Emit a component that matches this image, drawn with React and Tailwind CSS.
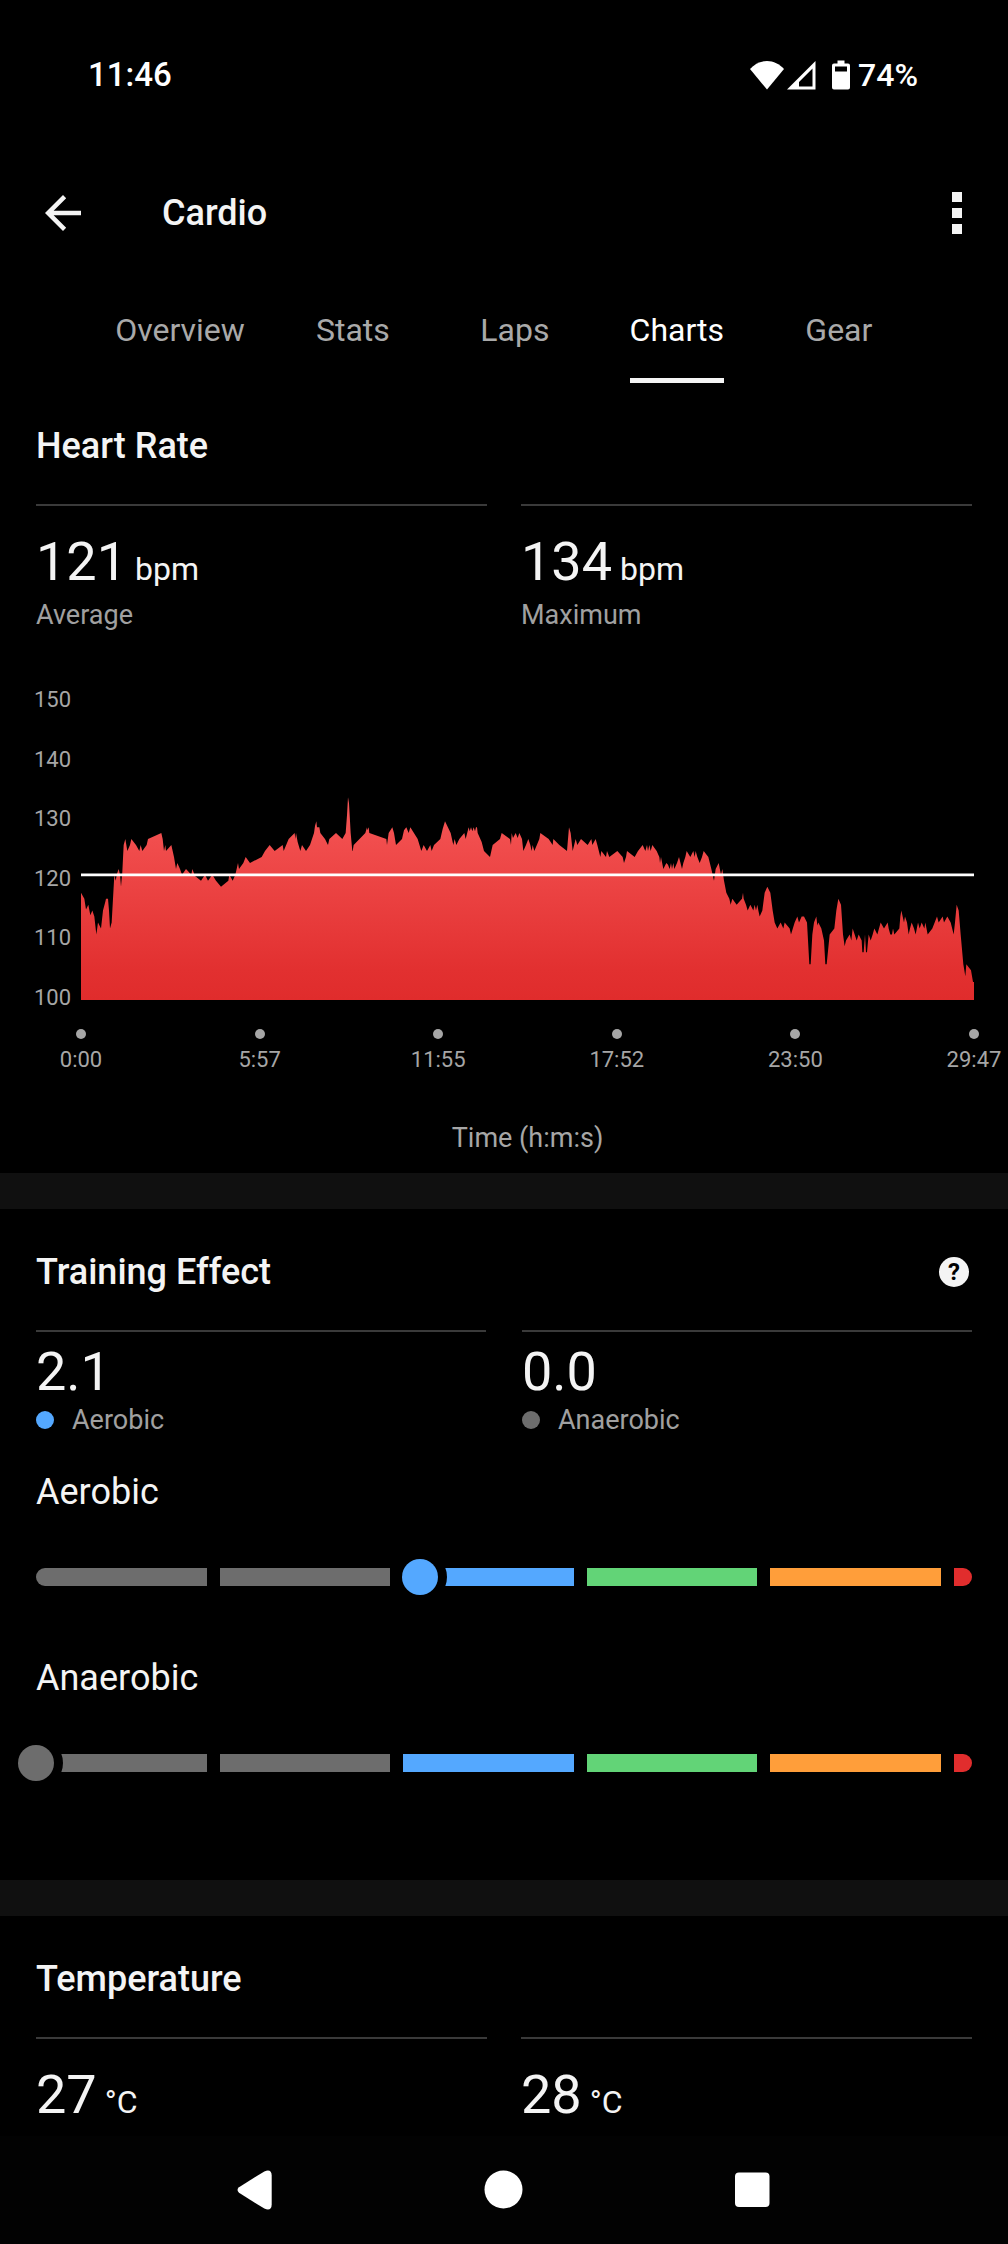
import React, { useState } from 'react';
import { MdArrowBack } from 'react-icons/md';

const TABS = ['Overview', 'Stats', 'Laps', 'Charts', 'Gear'];

const Y_LABELS = [150, 140, 130, 120, 110, 100];
const X_LABELS = ['0:00', '5:57', '11:55', '17:52', '23:50', '29:47'];

// chart units: the whole activity is 2679 wide, 50 bpm is 893 high
const CHART_W = 2679;
const CHART_H = 893;
const MIN_BPM = 100;
const MAX_BPM = 150;
const AVG_BPM = 121;

// "offset,bpm" samples, each lap's offsets are counted from its own start
const LAPS = [
  {
    start: -183,
    samples:
      '183,118 193,117 198,115.2 205,116 211,114.2 217,115 223,114 226,112.5 229,111 234,113 243,112 249,115 256,116.5 258,117 264,117 267,115 270,112 275,113 280,118 283,121 287,120 291,121.2 296,122 300,121 303,119 307,121.5 311,126 316,127 322,125 330,126 334,127 348,126 358,125 362,126 367,125 380,126 384,127 424,128 428,127 432,125 436,126 438,125 454,126 462,124 468,122 472,123 480,122 486,121 498,122 514,121 517,122 525,120.8 543,120 555,121 564,120 577,121 588,120 603,119 625,120 628,121 638,120 646,121 654,123 657,122 670,123 677,124 690,123 725,124 735,125 749,126 764,125 788,126 791,125 806,127 824,128 826,127 828,128 833,126.5 841,125 846,126 858,125 870,126 882,128 885,129.2 889,130 891,129 898,129 901,128 915,127 924,126 928,127 948,128 967,127 977,128 981,131 984,134 987,133 992,128 997,125',
  },
  {
    start: 777,
    samples:
      '38,125 41,126 76,128 81,129 82,128.5 86,129 88,128 139,127 141,126 146,128 157,129 162,128 168,126 186,127 192,128.5 199,129 206,128 211,129 233,127 244,125 251,126 261,125 271,126 275,125 282,126 301,127 308,128.7 315,130 332,128 340,126 344,127 349,126 358,127 373,128 377,127 386,129 389,128.3 393,129 397,128.3 401,129 405,128.3 408,129 411,129 413,128 425,126.5 432,125 450,124 458,126 480,127 485,128 510,127 513,126 515,128 519,127.2 527,128 533,127.2 538,128 546,127 550,125 558,126 565,127 571,126 575,125 578,126 583,125 598,127 601,128 626,127 638,126 640,127 658,126 681,125 684,127 687,129 692,128 698,125 707,127 712,126 723,127 743,126 754,127 757,126 767,127 772,126 781,124 784,125 798,124 801,125 808,124 832,125 848,124 852,123 858,124 861,125 884,124 894,125 908,126 916,125 921,126 924,125 928,126 932,125 937,126 950,125 958,124 960,123 963,124 970,122 979,123',
  },
  {
    start: 1761,
    samples:
      '0,122.7 5,122 9,123 12,122 16,123 19,122 27,123 33,124 42,122 46,123 52,124 56,125 67,124 76,125 80,124 83,125 88,124 95,123 102,124 107,125 121,124 130,122 138,120 143,122 152,123 159,121 163,122 168,120 175,118 184,117 188,116 193,117 206,116 222,117 225,118 227,117 234,116 239,115 247,116 256,115 260,116 264,115 268,116 271,115 275,114 283,115 290,118 298,119 307,118 314,115 320,113 328,112 338,113 346,112 350,113 365,112 369,111 380,113 388,114 393,113 401,114 408,114 417,113 420,110 424,106 428,106 433,111 438,113 445,114 448,112.5 451,113 460,112 468,110 472,106 476,106 485,111 499,112 505,115 511,117 519,116 525,111 530,109 534,110 545,111 550,110 554,112 566,110 572,111 581,110 583,108 587,108 591,111 594,108 597,108 602,111 608,110 614,111 619,112 628,111 638,113 648,112 659,113 662,112 667,111 672,111 675,112 679,111 694,112 697,114 700,115 708,113 711,114 717,113 722,111 726,112 731,113 738,112 743,111 750,113 755,112 761,113 769,112 772,113 779,111 793,112 800,113 807,114 812,113 824,114 828,113 838,114 848,113 857,111 861,113 866,116 872,115 878,111 886,106 892,104 895,106 909,105 915,103 918,103',
  },
];

const toY = bpm => ((MAX_BPM - bpm) / (MAX_BPM - MIN_BPM)) * CHART_H;

const areaPoints = () => {
  const line = LAPS.flatMap(({ start, samples }) =>
    samples.split(' ').map(s => {
      const [x, bpm] = s.split(',').map(Number);
      return `${start + x},${toY(bpm).toFixed(1)}`;
    })
  );
  return [`0,${CHART_H}`, ...line, `${CHART_W},${CHART_H}`].join(' ');
};

const StatusBar = () => (
  <div className="h-[150px] pl-[88px] pr-[90px] flex items-center justify-between text-white text-[32px] leading-10 font-medium">
    <span className="text-[33px]">11:46</span>
    <div className="flex items-center">
      <svg className="w-[34px] h-[30px]" viewBox="0 0 34 30" fill="currentColor">
        <path d="M17 29.500L0 9C4.500 4 10.500 1 17 1s12.500 3 17 8z" />
      </svg>
      <svg className="w-[30px] h-[30px] ml-[3px]" viewBox="0 0 30 30" fill="currentColor">
        <path fillRule="evenodd" d="M0 29.500L28.500 1v28.500zM12 26.500h13.500V8.500L12 22z" />
      </svg>
      <svg className="w-[18px] h-[30px] ml-[15px]" viewBox="0 0 18 30" fill="currentColor">
        <path
          fillRule="evenodd"
          d="M5.500 0.500h7v3H16a2 2 0 0 1 2 2V27.500a2 2 0 0 1-2 2H2a2 2 0 0 1-2-2V5.500a2 2 0 0 1 2-2h3.500zM3 6.500v5h12v-5z"
        />
      </svg>
      <span className="ml-2">74%</span>
    </div>
  </div>
);

const AppBar = () => (
  <header className="h-[126px] pl-9 pr-6 flex items-center">
    <button type="button" aria-label="Back">
      <MdArrowBack className="w-[54px] h-[54px]" />
    </button>
    <h1 className="ml-[72px] flex-1 text-[36px] leading-[44px] font-medium">Cardio</h1>
    <button type="button" aria-label="More options" className="w-[54px] h-[54px] flex items-center justify-center">
      <svg className="w-[10px] h-[42px]" viewBox="0 0 10 42" fill="currentColor">
        <rect width="10" height="10" />
        <rect y="16" width="10" height="10" />
        <rect y="32" width="10" height="10" />
      </svg>
    </button>
  </header>
);

const Tabs = ({ active, onSelect }) => (
  <nav className="h-[107px] flex justify-center">
    {TABS.map(tab => (
      <button
        key={tab}
        type="button"
        onClick={() => onSelect(tab)}
        className="min-w-[162px] px-[27px] flex justify-center text-[32px] leading-10"
      >
        <span
          className={
            tab === active
              ? 'h-full flex items-center border-y-[5px] border-t-transparent border-b-[#f4f4f4] text-white'
              : 'h-full flex items-center border-y-[5px] border-transparent text-[#a9a9a9]'
          }
        >
          {tab}
        </span>
      </button>
    ))}
  </nav>
);

const SectionTitle = ({ children, action }) => (
  <div className="pt-[41px] pb-9 flex items-center justify-between">
    <h2 className="text-[36px] leading-[44px] font-medium">{children}</h2>
    {action}
  </div>
);

const Stat = ({ value, unit, label }) => (
  <div className="border-t-2 border-[#3a3a3a] pt-6">
    <div className="flex items-baseline gap-2 text-[54px] leading-[64px]">
      {value}
      <span className="text-[32px] leading-8">{unit}</span>
    </div>
    {label && <div className="mt-[5px] text-[27px] leading-8 text-[#a0a0a0]">{label}</div>}
  </div>
);

const EffectStat = ({ value, label, dotClass }) => (
  <div className="border-t-2 border-[#3a3a3a] pt-2">
    <div className="text-[54px] leading-[64px]">{value}</div>
    <div className="flex items-center gap-[18px] text-[27px] leading-8 text-[#a0a0a0]">
      <span className={`w-[18px] h-[18px] rounded-full ${dotClass}`} />
      {label}
    </div>
  </div>
);

const HeartRateChart = () => (
  <div className="px-[34px] text-[22px] text-[#a6a6a6]">
    <div className="flex">
      <div className="w-[47px] shrink-0 flex flex-col justify-between leading-5">
        {Y_LABELS.map(v => <span key={v}>{v}</span>)}
      </div>
      <svg
        className="flex-1 min-w-0 h-[298px] mt-3 mb-2"
        viewBox={`0 0 ${CHART_W} ${CHART_H}`}
        preserveAspectRatio="none"
        role="img"
        aria-label="Heart rate over time"
      >
        <defs>
          <linearGradient id="hrFill" x1="0" y1="0" x2="0" y2="1">
            <stop offset="0" stopColor="#f65757" />
            <stop offset="0.85" stopColor="#e23030" />
            <stop offset="1" stopColor="#e02c2c" />
          </linearGradient>
        </defs>
        <polygon points={areaPoints()} fill="url(#hrFill)" />
        <line x1="0" x2={CHART_W} y1={toY(AVG_BPM)} y2={toY(AVG_BPM)} stroke="#fff" strokeWidth="8" />
      </svg>
    </div>

    <div className="mt-[21px] ml-[47px] flex justify-between">
      {X_LABELS.map(t => (
        <div key={t} className="w-0 flex flex-col items-center gap-[9px]">
          <span className="w-[10px] h-[10px] shrink-0 rounded-full bg-[#a6a6a6]" />
          <span className="leading-6">{t}</span>
        </div>
      ))}
    </div>
    <div className="mt-[50px] ml-[47px] text-center text-[27px] leading-8">Time (h:m:s)</div>
  </div>
);

const EffectBar = ({ label, percent, thumbClass }) => (
  <div>
    <h3 className="text-[36px] leading-[44px]">{label}</h3>
    <div
      role="meter"
      aria-label={label}
      aria-valuemin={0}
      aria-valuemax={100}
      aria-valuenow={percent}
      className="relative mt-[54px] h-[18px] flex gap-[13px]"
    >
      <span className="flex-1 bg-[#6d6d6d] rounded-l-full" />
      <span className="flex-1 bg-[#6d6d6d]" />
      <span className="flex-1 bg-[#54a8ff]" />
      <span className="flex-1 bg-[#62d477]" />
      <span className="flex-1 bg-[#ff9e3a]" />
      <span className="w-[18px] bg-[#e12d2d] rounded-r-full" />
      <span
        className={`absolute top-1/2 w-9 h-9 -translate-x-1/2 -translate-y-1/2 rounded-full ring-[9px] ring-black ${thumbClass}`}
        style={{ left: `${percent}%` }}
      />
    </div>
  </div>
);

const Divider = () => <div className="h-9 bg-[#101010]" />;

const SystemNav = () => (
  <div className="h-[108px] bg-[#020202] text-white flex items-center justify-center gap-[195px]">
    <button type="button" aria-label="System back">
      <svg className="w-[54px] h-[54px]" viewBox="0 0 54 54" fill="currentColor">
        <path d="M11 24.300L36.300 8.400Q43.500 5.500 43.700 12.500V41.500Q43.500 48.500 36.300 45.600L11 29.700Q8 27 11 24.300z" />
      </svg>
    </button>
    <button type="button" aria-label="System home">
      <svg className="w-[54px] h-[54px]" viewBox="0 0 54 54" fill="currentColor">
        <circle cx="26.500" cy="26.500" r="19" />
      </svg>
    </button>
    <button type="button" aria-label="Recent apps">
      <svg className="w-[54px] h-[54px]" viewBox="0 0 54 54" fill="currentColor">
        <rect x="9" y="9.500" width="34.500" height="34.500" rx="4" />
      </svg>
    </button>
  </div>
);

const App = () => {
  const [tab, setTab] = useState('Charts');

  return (
    <div className="min-h-screen flex flex-col bg-black text-[#f4f4f4] font-['Roboto',sans-serif]">
      <StatusBar />
      <AppBar />
      <Tabs active={tab} onSelect={setTab} />

      <main className="flex-1">
        <section className="pb-[19px]">
          <div className="px-9 mb-[59px]">
            <SectionTitle>Heart Rate</SectionTitle>
            <div className="grid grid-cols-2 gap-[34px]">
              <Stat value="121" unit="bpm" label="Average" />
              <Stat value="134" unit="bpm" label="Maximum" />
            </div>
          </div>
          <HeartRateChart />
        </section>

        <Divider />

        <section className="px-9 pb-[108px]">
          <SectionTitle
            action={
              <button type="button" aria-label="About training effect" className="w-9 h-9 flex items-center justify-center">
                <span className="w-[30px] h-[30px] rounded-full bg-[#f4f4f4] text-black text-[24px] leading-[30px] font-bold text-center">
                  ?
                </span>
              </button>
            }
          >
            Training Effect
          </SectionTitle>
          <div className="grid grid-cols-2 gap-9">
            <EffectStat value="2.1" label="Aerobic" dotClass="bg-[#54a8ff]" />
            <EffectStat value="0.0" label="Anaerobic" dotClass="bg-[#6d6d6d]" />
          </div>
          <div className="mt-[34px] flex flex-col gap-[70px]">
            <EffectBar label="Aerobic" percent={41} thumbClass="bg-[#54a8ff]" />
            <EffectBar label="Anaerobic" percent={0} thumbClass="bg-[#6d6d6d]" />
          </div>
        </section>

        <Divider />

        <section className="px-9">
          <SectionTitle>Temperature</SectionTitle>
          <div className="grid grid-cols-2 gap-[34px]">
            <Stat value="27" unit="°C" />
            <Stat value="28" unit="°C" />
          </div>
        </section>
      </main>

      <SystemNav />
    </div>
  );
};

export default App;
